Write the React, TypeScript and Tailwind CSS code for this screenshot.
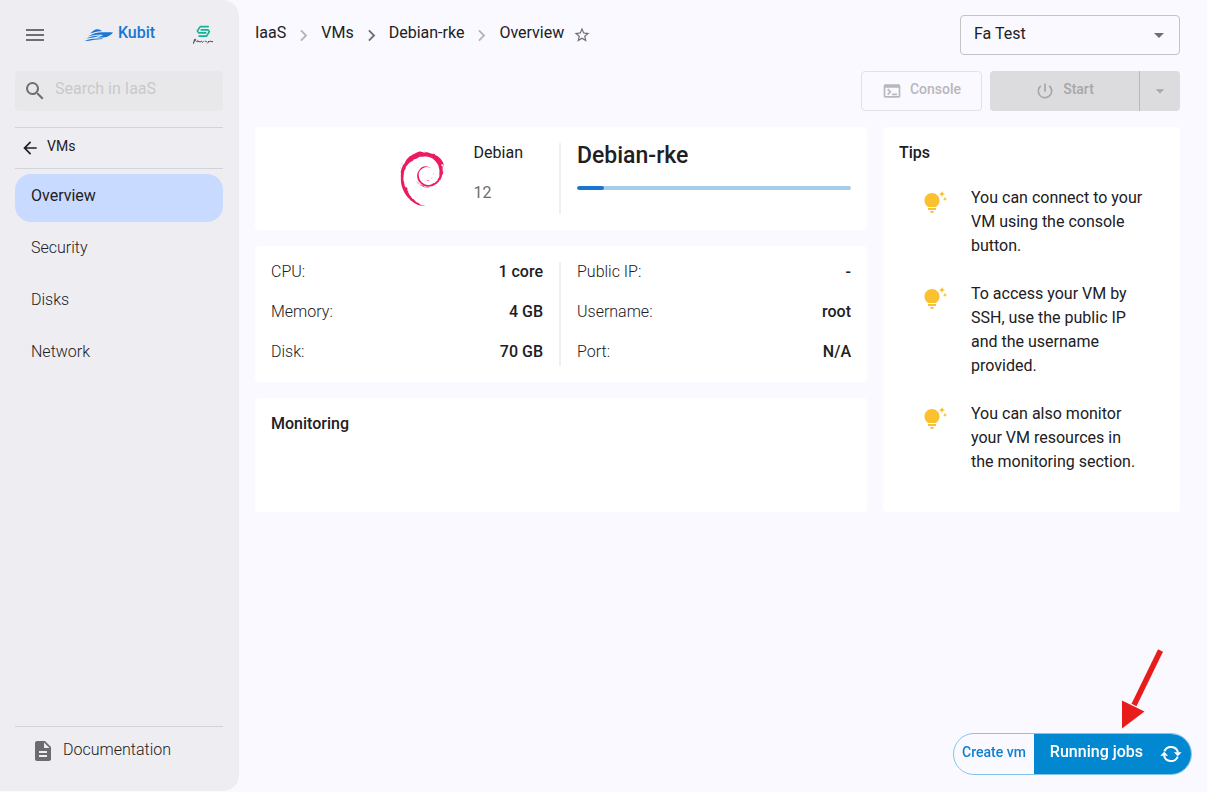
import type { ReactNode } from "react";
import {
  MdArrowBack,
  MdArrowDropDown,
  MdChevronRight,
  MdDescription,
  MdMenu,
  MdOutlineTerminal,
  MdPowerSettingsNew,
  MdSearch,
  MdStarBorder,
  MdTipsAndUpdates,
} from "react-icons/md";
import { SiDebian } from "react-icons/si";

const navItems = ["Overview", "Security", "Disks", "Network"];

const crumbs = ["IaaS", "VMs", "Debian-rke"];

const specs = [
  ["CPU:", "1 core"],
  ["Memory:", "4 GB"],
  ["Disk:", "70 GB"],
];

const access = [
  ["Public IP:", "-"],
  ["Username:", "root"],
  ["Port:", "N/A"],
];

const tips = [
  "You can connect to your VM using the console button.",
  "To access your VM by SSH, use the public IP and the username provided.",
  "You can also monitor your VM resources in the monitoring section.",
];

function BoatLogo() {
  return (
    <svg viewBox="0 0 30 14" className="h-[14px] w-[30px]" fill="#1976d2" aria-hidden="true">
      <path d="M6.200 5.600C8.300 3.600 10.500 1.800 12.600 1.300c2.200-.3 4 .4 5.300 1.900-3.600-.3-7.600.6-11.700 2.400z" />
      <path d="M3.600 8.600C8.500 5.600 13.500 4.100 19 4.200c3.300.1 6.700-.2 10 .2-2 2.500-4.700 4.200-8 4.900-2.900.5-5.600.2-8.200.4L19.500 6.900c-5.300-.5-10.600.1-15.900 1.700z" />
      <path d="M2.200 10.700c4-2 8.500-3 13.500-3.100-4.300 1.900-8.700 2.300-13.500 3.100z" />
      <path d="M.6 12.900c4.700-1.900 9-2.600 13.200-2.500 2 .1 3.800 0 5.400-.3-1.700 1.300-3.800 1.500-6 1.400-4.200.1-8 2-12.600 1.400z" />
    </svg>
  );
}

function PartnerLogo() {
  return (
    <svg viewBox="0 0 22 20" className="h-5 w-[22px]" fill="none" aria-hidden="true">
      <g stroke="#10b497" strokeWidth="1.600" strokeLinejoin="round" strokeLinecap="round">
        <path d="M16.300 1.600H8.200L5.400 5.800l1.200 2.100h7.200" />
        <path d="M9.200 4.900h6.900l1.200 1.900-2.700 4.300H7" />
      </g>
      <path
        d="M1.500 18.700l1-4.200c1.500-.8 2.100.9.200 1.500M4.400 16.800c1.200-1.600 1.500-.8 1.400.1 1-1.300 1.500-.2 2.200 0s1.200-1.200 1.800-.3 1.200.4 1.800-.2M12.800 16.400c.9-.5 1 .6 2 .2M15.400 18.300c.8-.6 1-1.400 1.200-2.200M17.300 16.600c1.200-1.100 1.600.3 3.700.1"
        stroke="#222"
        strokeWidth=".9"
      />
    </svg>
  );
}

function SyncIcon() {
  return (
    <svg viewBox="0 0 24 24" className="size-6" fill="none" aria-hidden="true">
      <path d="M5.300 9.400A7.200 7.200 0 0 1 19 10.500M18.700 14.600A7.200 7.200 0 0 1 5 13.500" stroke="white" strokeWidth="2" />
      <path d="M14.900 10.200h7.800l-3.900 4zM1.300 13.800h7.800l-3.900-4z" fill="white" />
    </svg>
  );
}

function Card({ children, className = "" }: { children: ReactNode; className?: string }) {
  return <section className={`rounded bg-white p-4 ${className}`}>{children}</section>;
}

function Facts({ rows, className }: { rows: string[][]; className: string }) {
  return (
    <dl className={`flex flex-col gap-4 ${className}`}>
      {rows.map(([label, value]) => (
        <div key={label} className="flex items-center justify-between pb-1 leading-5">
          <dt className="font-light">{label}</dt>
          <dd className="font-medium">{value}</dd>
        </div>
      ))}
    </dl>
  );
}

function Sidebar() {
  return (
    <aside className="mb-px flex w-[239px] shrink-0 flex-col rounded-r-2xl bg-[#eeedf2] pr-4 pl-[15px]">
      <header className="flex h-[70px] items-center justify-between pl-2">
        <button type="button" aria-label="Menu" className="text-[#6f6f72]">
          <MdMenu className="size-6" />
        </button>
        <a href="#" className="flex items-center gap-1 font-medium text-[#1976d2]">
          <BoatLogo />
          <span className="pb-1">Kubit</span>
        </a>
        <span className="pr-[9px]">
          <PartnerLogo />
        </span>
      </header>
      <label className="mt-px flex h-10 items-center gap-2 rounded bg-[#e8e8ea] pl-2 text-[#6f6f72]">
        <MdSearch className="size-6 shrink-0" />
        <input
          type="search"
          aria-label="Search"
          placeholder="Search in IaaS"
          className="w-full min-w-0 bg-transparent pb-1 outline-none placeholder:text-[#c9c9cc]"
        />
      </label>
      <a
        href="#"
        className="mt-4 flex h-[42px] items-center gap-[7px] border-y border-[#d3d3d7] pl-[5px] text-sm text-[#202023]"
      >
        <MdArrowBack className="size-5" />
        <span className="pb-1">VMs</span>
      </a>
      <nav className="mt-[5px] flex flex-col gap-1">
        {navItems.map((item) => (
          <a
            key={item}
            href="#"
            aria-current={item === "Overview" ? "page" : undefined}
            className={`flex h-12 items-center rounded-2xl px-4 pb-[5px] ${
              item === "Overview" ? "bg-[#c8daff] text-[#1f2023]" : "font-light text-[#202023]"
            }`}
          >
            {item}
          </a>
        ))}
      </nav>
      <a
        href="#"
        className="mt-auto flex h-[65px] items-start gap-2 border-t border-[#d3d3d7] pt-3 pl-4 font-light text-[#202023]"
      >
        <MdDescription className="size-6 text-[#6c6c6f]" />
        <span className="leading-[22px]">Documentation</span>
      </a>
    </aside>
  );
}

export default function App() {
  return (
    <div className="relative flex min-h-screen bg-[#faf9ff] font-[Roboto,sans-serif] text-base text-[#202023]">
      <Sidebar />
      <main className="min-w-0 flex-1 pr-[27px] pl-4">
        <div className="flex items-center justify-between pt-[15px]">
          <nav aria-label="Breadcrumb" className="flex items-center">
            {crumbs.map((crumb) => (
              <span key={crumb} className="flex items-center">
                <a href="#" className="pb-1">
                  {crumb}
                </a>
                <MdChevronRight
                  className={`mx-[6px] size-[23px] ${crumb === "VMs" ? "text-[#6f6f72]" : "text-[#b5b5b9]"}`}
                />
              </span>
            ))}
            <span className="pb-1">Overview</span>
            <button type="button" aria-label="Add to favourites" className="ml-[9px] text-[#6f6f72]">
              <MdStarBorder className="size-[18px]" />
            </button>
          </nav>
          <div className="relative">
            <select
              aria-label="Project"
              className="h-10 w-[220px] appearance-none rounded border border-[#c4c4c8] bg-transparent pr-8 pb-[2px] pl-[13px]"
            >
              <option>Fa Test</option>
            </select>
            <MdArrowDropDown className="pointer-events-none absolute top-2 right-[9px] size-6 text-[#6f6f72]" />
          </div>
        </div>

        <div className="mt-4 flex justify-end gap-2 text-sm font-medium">
          <button
            type="button"
            disabled
            className="flex h-10 items-center gap-2 rounded border border-[#e2e1e7] px-5 text-[#b8b7bc]"
          >
            <MdOutlineTerminal className="size-5" />
            <span className="pb-1">Console</span>
          </button>
          <div className="flex h-10 w-[190px] overflow-hidden rounded bg-[#dcdcde] text-[#a6a6a8]">
            <button type="button" disabled className="flex flex-1 items-center justify-center gap-2">
              <MdPowerSettingsNew className="size-5" />
              <span className="pb-1">Start</span>
            </button>
            <button
              type="button"
              disabled
              aria-label="More actions"
              className="flex w-[41px] items-center justify-center border-l border-[#b9b9bc]"
            >
              <MdArrowDropDown className="size-5" />
            </button>
          </div>
        </div>

        <div className="mt-4 grid grid-cols-[minmax(0,1fr)_297px] gap-4">
          <div className="flex flex-col gap-4">
            <Card className="grid grid-cols-2">
              <div className="flex justify-end gap-6 border-r-2 border-[#efeff0] pr-9">
                <SiDebian className="mt-2 size-[55px] text-[#ea1b61]" />
                <div className="flex flex-col gap-5 pb-[11px] leading-5">
                  <span>Debian</span>
                  <span className="text-[#6c6c6f]">12</span>
                </div>
              </div>
              <div className="pl-4">
                <h1 className="text-[23px] leading-[26px] font-medium">Debian-rke</h1>
                <div
                  role="progressbar"
                  aria-label="Progress"
                  aria-valuenow={10}
                  className="mt-[17px] h-1 overflow-hidden rounded-full bg-[#a6cdea]"
                >
                  <div className="h-full w-1/10 rounded-full bg-[#1976d2]" />
                </div>
              </div>
            </Card>
            <Card className="grid grid-cols-2">
              <Facts rows={specs} className="border-r-2 border-[#efeff0] pr-4" />
              <Facts rows={access} className="pl-4" />
            </Card>
            <Card className="min-h-[114px]">
              <h2 className="leading-5 font-medium">Monitoring</h2>
            </Card>
          </div>
          <Card>
            <h2 className="leading-5 font-medium">Tips</h2>
            <ul className="mt-[23px] flex flex-col gap-6 pl-6">
              {tips.map((tip) => (
                <li key={tip} className="flex gap-6">
                  <MdTipsAndUpdates className="mt-[5px] size-6 shrink-0 text-[#fbc02d]" />
                  <p className="max-w-[174px] leading-6">{tip}</p>
                </li>
              ))}
            </ul>
          </Card>
        </div>
      </main>

      <svg
        viewBox="0 0 46 82"
        className="pointer-events-none absolute right-[42px] bottom-[62px] h-[82px] w-[46px]"
        aria-hidden="true"
      >
        <path d="M41.500 2.500L15 57" stroke="#e91c1c" strokeWidth="5.500" />
        <path d="M3 80.500L3 52.500L25.500 63.500z" fill="#e91c1c" />
      </svg>
      <div className="fixed right-[15px] bottom-[17px] flex h-[42px] overflow-hidden rounded-full border border-[#83c4ea] bg-[#faf9ff] font-medium">
        <button type="button" className="pr-2 pb-1 pl-2 text-sm text-[#0f7fcf]">
          Create vm
        </button>
        <button type="button" className="flex items-center gap-4 bg-[#0288d1] pr-2 pl-4 text-white">
          <span className="pb-1">Running jobs</span>
          <SyncIcon />
        </button>
      </div>
    </div>
  );
}
